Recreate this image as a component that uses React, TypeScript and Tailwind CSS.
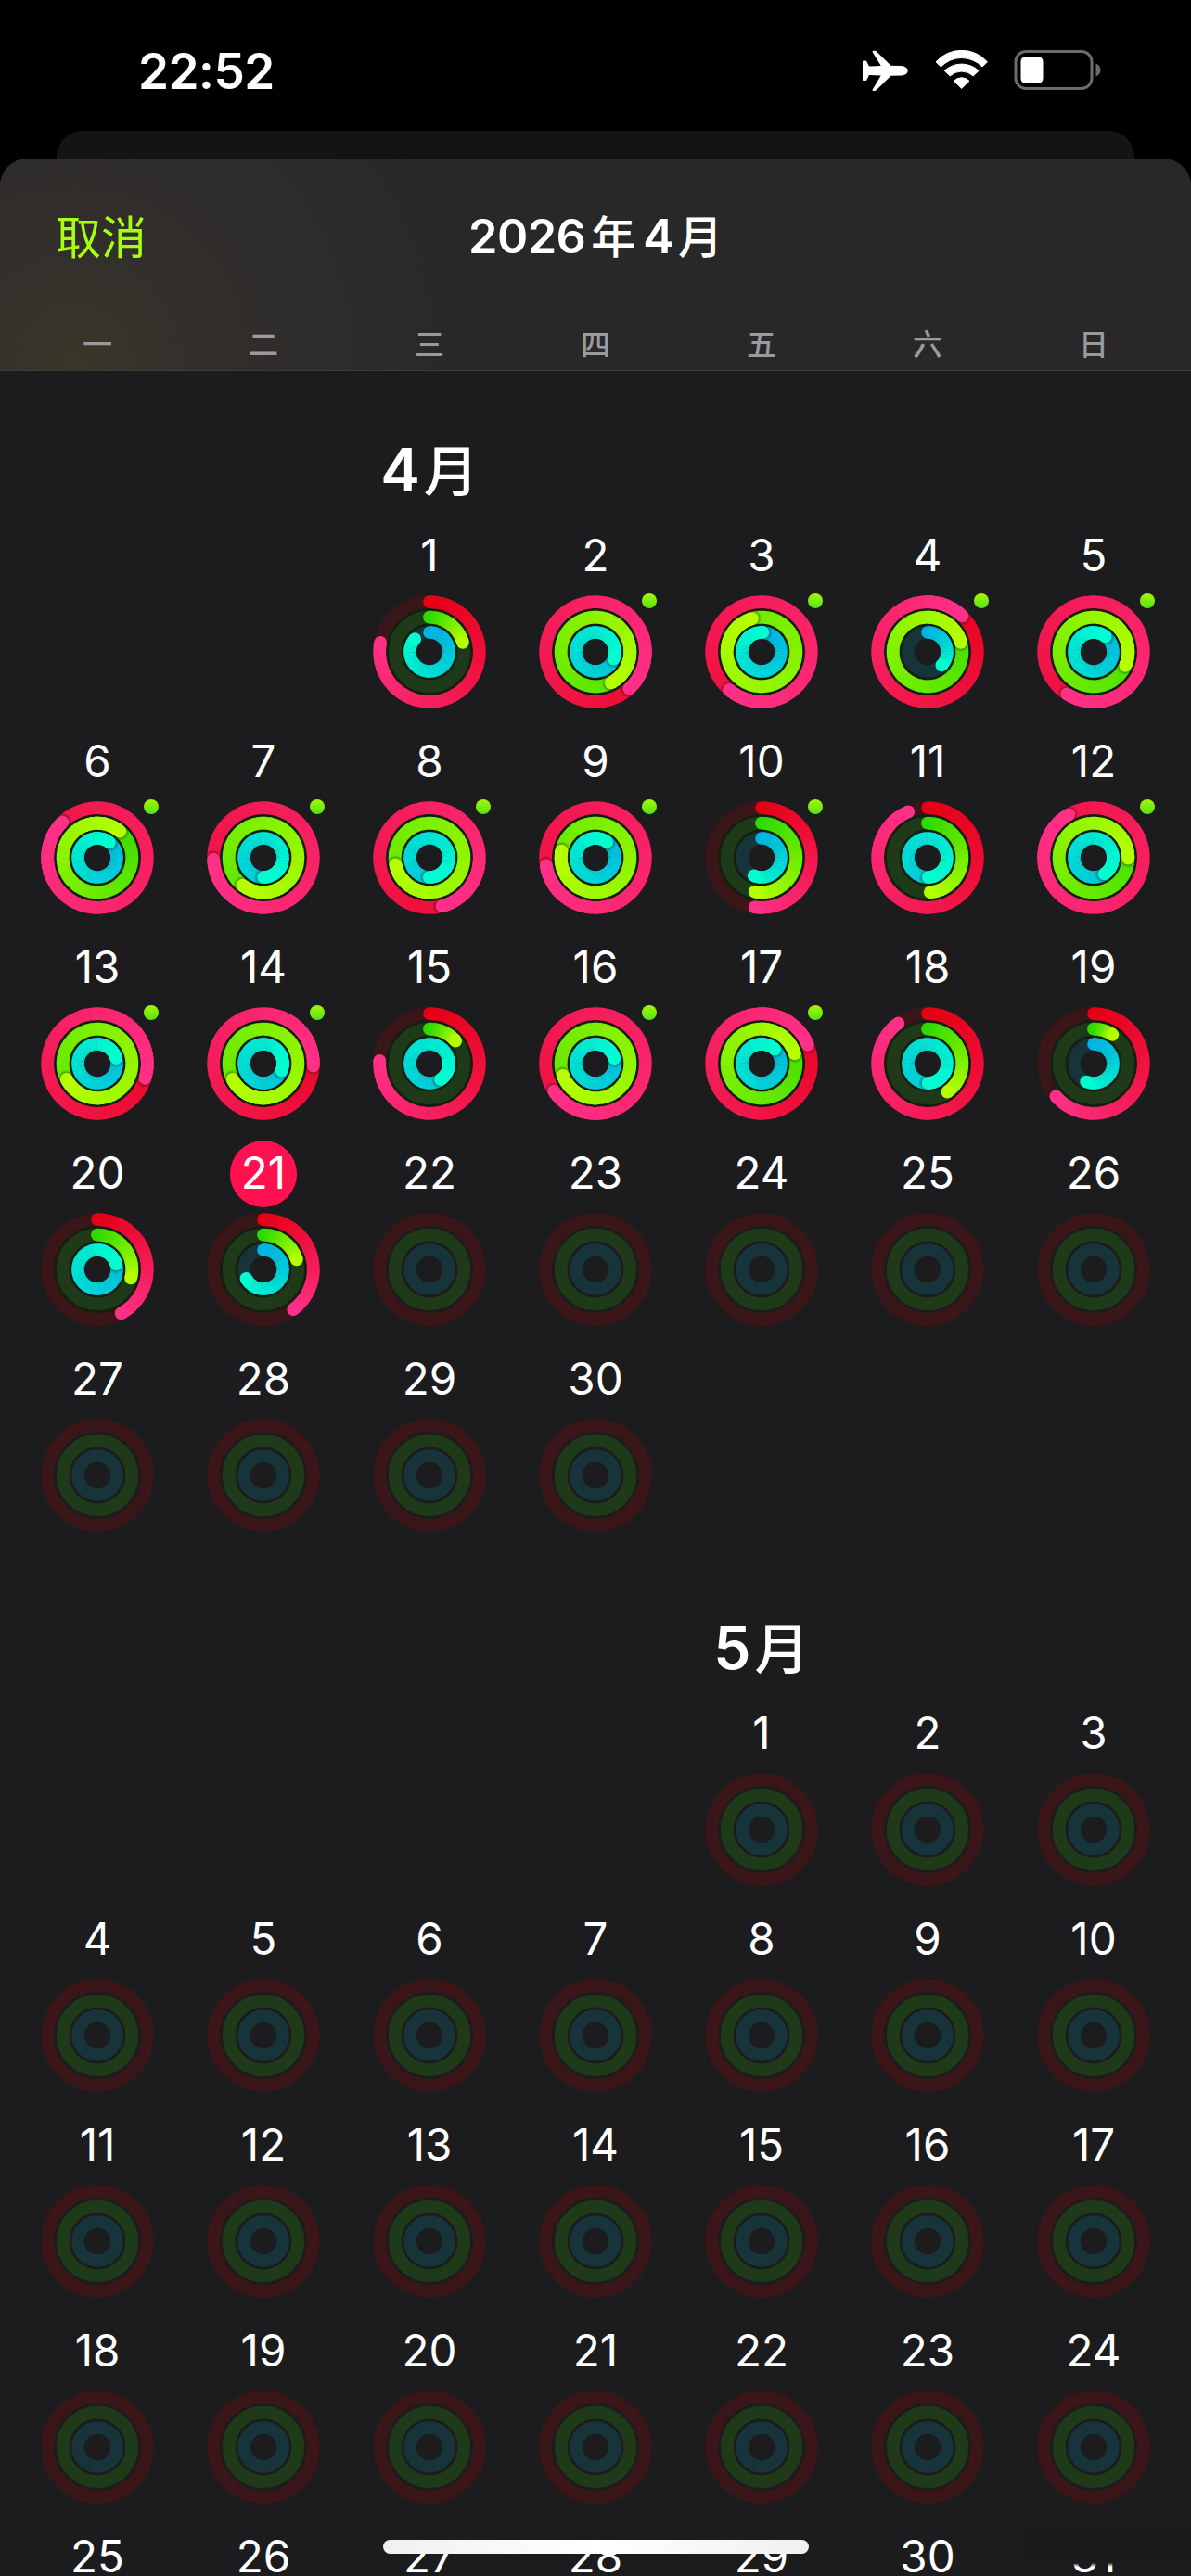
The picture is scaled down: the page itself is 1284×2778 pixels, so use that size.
import React from 'react';

type RGB = [number, number, number];

interface RingStyle {
  radius: number;
  width: number;
  track: string;
  from: RGB;
  to: RGB;
}

interface MonthData {
  name: string;
  offset: number;
  days: number;
  today?: number;
  titleClass: string;
}

const WEEKDAYS = ['一', '二', '三', '四', '五', '六', '日'];

// Move, exercise, stand
const RINGS: RingStyle[] = [
  { radius: 53.8, width: 13.7, track: '#3a1619', from: [229, 0, 20], to: [255, 48, 136] },
  { radius: 37.3, width: 13.8, track: '#1f3a18', from: [48, 218, 0], to: [182, 255, 0] },
  { radius: 21, width: 13.5, track: '#17343b', from: [0, 180, 226], to: [0, 255, 208] },
];

const MONTHS: MonthData[] = [
  { name: '4月', offset: 2, days: 30, today: 21, titleClass: 'col-start-3 h-[164px] pt-[67px]' },
  { name: '5月', offset: 4, days: 31, titleClass: 'col-start-5 h-[160px] pt-[63px]' },
];

// Progress per day of April, 1 is a closed ring
const ACTIVITY: Record<number, [number, number, number]> = {
  1: [0.78, 0.206, 0.866],
  2: [1.382, 1.426, 1.31],
  3: [1.613, 1.957, 1.012],
  4: [1.123, 1.206, 0.37],
  5: [1.59, 1.315, 1.105],
  6: [1.877, 1.113, 1.106],
  7: [1.745, 1.603, 1.5],
  8: [1.46, 1.718, 1.503],
  9: [1.726, 1.782, 1.1],
  10: [0.522, 0.531, 0.565],
  11: [0.937, 0.488, 1.495],
  12: [1.917, 1.253, 1.407],
  13: [1.298, 1.675, 1.206],
  14: [1.258, 1.675, 1.31],
  15: [0.759, 0.136, 1.404],
  16: [1.657, 1.695, 1.208],
  17: [1.189, 1.204, 1.12],
  18: [0.9, 0.403, 1.497],
  19: [0.636, 0.092, 0.562],
  20: [0.421, 0.29, 1.208],
  21: [0.398, 0.204, 0.674],
};

const WORKOUT_DAYS = [2, 3, 4, 5, 6, 7, 8, 9, 10, 12, 13, 14, 16, 17];

const pointAt = (turn: number, radius: number) => {
  const angle = turn * Math.PI * 2;
  return { x: Math.sin(angle) * radius, y: -Math.cos(angle) * radius };
};

const mix = (from: RGB, to: RGB, t: number) =>
  `rgb(${from.map((c, i) => Math.round(c + (to[i] - c) * t)).join(',')})`;

const STEP = 1 / 90;

const ProgressArc: React.FC<{ ring: RingStyle; value: number; id: string }> = ({ ring, value, id }) => {
  const { radius, width, from, to } = ring;
  const start = Math.max(0, value - 1);
  const count = Math.ceil((value - start) / STEP);
  const segments = Array.from({ length: count }, (_, i) => {
    const a = start + i * STEP;
    const b = Math.min(a + STEP, value);
    const p = pointAt(a, radius);
    const q = pointAt(Math.min(b + 0.003, value), radius);
    return (
      <path
        key={i}
        d={`M${p.x} ${p.y}A${radius} ${radius} 0 0 1 ${q.x} ${q.y}`}
        stroke={mix(from, to, (a + b) / 2 / value)}
        strokeWidth={width}
        fill="none"
      />
    );
  });
  const first = pointAt(0, radius);
  const last = pointAt(value, radius);
  const shadow = pointAt(value + 0.9 / (radius * Math.PI * 2), radius);

  return (
    <g>
      {value <= 1 && <circle cx={first.x} cy={first.y} r={width / 2} fill={mix(from, to, 0)} />}
      {segments}
      {value > 1 && (
        <>
          <radialGradient id={id} gradientUnits="userSpaceOnUse" cx={shadow.x} cy={shadow.y} r={9.5}>
            <stop offset="0.6" stopColor="#000" stopOpacity="0.35" />
            <stop offset="1" stopColor="#000" stopOpacity="0" />
          </radialGradient>
          <circle r={radius} fill="none" stroke={`url(#${id})`} strokeWidth={width} />
          {segments.slice(-18)}
        </>
      )}
      <circle cx={last.x} cy={last.y} r={width / 2} fill={mix(from, to, 1)} />
    </g>
  );
};

const ActivityRings: React.FC<{ values?: [number, number, number]; id: string }> = ({ values, id }) => (
  <svg className="w-[122px] h-[122px]" viewBox="-61 -61 122 122">
    {values && <circle r="52" fill="#14200f" />}
    {values && <circle r="14.5" fill="#1c1c1e" />}
    {RINGS.map((ring, i) => (
      <g key={i}>
        <circle r={ring.radius} fill="none" stroke={ring.track} strokeWidth={ring.width} />
        {values && <ProgressArc ring={ring} value={values[i]} id={`${id}-${i}`} />}
      </g>
    ))}
  </svg>
);

const DayCell: React.FC<{ day: number; month: MonthData }> = ({ day, month }) => {
  const isCurrent = month.today !== undefined;
  const values = isCurrent ? ACTIVITY[day] : undefined;

  return (
    <div className="h-[222px] flex flex-col items-center gap-1.5">
      <div
        className={`w-[72px] h-[72px] shrink-0 rounded-full flex items-center justify-center ${
          month.today === day ? 'bg-[#ff1150]' : ''
        }`}
      >
        <span className="text-[47.5px] leading-[68px] pb-0.5 text-white">{day}</span>
      </div>
      <div className="relative">
        <ActivityRings values={values} id={`${month.name}-${day}`} />
        {isCurrent && WORKOUT_DAYS.includes(day) && (
          <span className="absolute -top-0.5 left-[110.5px] w-4 h-4 rounded-full bg-linear-to-b from-[#a2f800] to-[#4fe314]" />
        )}
      </div>
    </div>
  );
};

const Month: React.FC<{ month: MonthData }> = ({ month }) => (
  <section className="grid grid-cols-7 px-[15.5px]">
    <h2 className={`${month.titleClass} flex items-baseline justify-center text-[64px] leading-[80px] font-semibold text-white whitespace-nowrap`}>
      {month.name.charAt(0)}
      <span className="ml-1 text-[59px] font-medium">月</span>
    </h2>
    <div className="col-span-7 grid grid-cols-7">
      {Array.from({ length: month.offset }, (_, i) => (
        <div key={`empty-${i}`} />
      ))}
      {Array.from({ length: month.days }, (_, i) => (
        <DayCell key={i} day={i + 1} month={month} />
      ))}
    </div>
  </section>
);

const StatusBar: React.FC = () => (
  <div className="h-[141px] shrink-0 flex items-start justify-between pl-[149px] pr-[96px]">
    <span className="mt-[44px] text-[53px] leading-[66px] tracking-[-0.5px] font-semibold text-white">22:52</span>
    <div className="mt-[54px] flex items-start">
      <svg className="w-[49px] h-[46px]" viewBox="0 0 49 46" fill="#fff">
        <path d="M0 12.4Q0 11.5 1 11.5H3Q4 11.5 4.4 12.4L7 17.6L19.7 17L10.7 2.2Q10.2 .7 11.5 .7H13Q14.4 .7 15.2 1.8L30.5 16.8L42 17Q48.8 18.2 48.8 22.3Q48.8 26.4 42 27.6L30.5 27.8L15.2 42.8Q14.4 43.9 13 43.9H11.5Q10.2 43.9 10.7 42.4L19.7 27.6L7 27L4.4 32.2Q4 33.1 3 33.1H1Q0 33.1 0 32.2Z" />
      </svg>
      <svg className="ml-[29px] w-[58px] h-[43px]" viewBox="0 0 58 43" fill="#fff" stroke="#fff" strokeWidth="1" strokeLinejoin="round">
        <path d="M1 12.8A37 37 0 0 1 56.4 12.8L51 18A31 31 0 0 0 6.4 18Z" />
        <path d="M10.2 22.3A27.3 27.3 0 0 1 47.2 22.3L41.2 27.9A18.6 18.6 0 0 0 16.2 27.9Z" />
        <path d="M20.4 33.3A11.6 11.6 0 0 1 37 33.3L28.7 41.4Z" />
      </svg>
      <svg className="ml-[27px] w-[95px] h-[43px]" viewBox="0 0 95 43">
        <rect x="2" y="1.5" width="82" height="40" rx="11" fill="none" stroke="#6c6c6c" strokeWidth="3" />
        <rect x="7.5" y="7" width="24" height="29" rx="5.5" fill="#fff" />
        <path d="M88.5 14.5Q93.5 16.5 93.5 21.5Q93.5 26.5 88.5 28.5Z" fill="#6c6c6c" />
      </svg>
    </div>
  </div>
);

const App: React.FC = () => {
  return (
    <div className="relative w-[1284px] h-[2778px] overflow-hidden bg-black flex flex-col font-['Inter','Noto_Sans_CJK_SC',sans-serif]">
      <StatusBar />
      <div className="mx-[61px] h-[30px] shrink-0 rounded-t-[28px] bg-[#141414]" />
      <main className="grow min-h-0 overflow-hidden rounded-t-[30px] bg-[#1c1c1e]">
        <header className="h-[229px] flex flex-col bg-[#282828] border-b border-[#3c3c3e] bg-[radial-gradient(circle_at_80px_220px,#3a3629_0px,#332f2b_120px,#2d2c2c_270px,transparent_440px)]">
          <div className="h-[171px] shrink-0 grid grid-cols-3 items-center px-[60px]">
            <button className="text-left text-[49px] leading-[60px] text-[#a6ff0f]">取消</button>
            <h1 className="pb-[3px] flex items-baseline justify-center text-[50.5px] leading-[60px] font-semibold text-white whitespace-nowrap">
              <span className="tracking-[-0.6px]">2026</span>
              <span className="ml-1.5 mr-2 text-[48px] font-medium">年</span>4
              <span className="ml-1 text-[48px] font-medium">月</span>
            </h1>
          </div>
          <div className="grid grid-cols-7 px-[15.5px]">
            {WEEKDAYS.map((name) => (
              <span key={name} className="text-center text-[32px] leading-[60px] font-medium text-[#9b9a9f]">
                {name}
              </span>
            ))}
          </div>
        </header>
        {MONTHS.map((month) => (
          <Month key={month.name} month={month} />
        ))}
      </main>

      {/* Bottom edge: fade over the last date and the home indicator */}
      <div className="absolute left-[1100px] top-[2725px] w-[184px] h-[43px] bg-linear-to-b from-[#1b1b1d] from-90% to-transparent" />
      <div className="absolute left-[413px] top-[2739px] w-[459px] h-[15px] rounded-full bg-linear-to-r from-[#f0f0f0] via-white to-[#f0f0f0]" />
    </div>
  );
};

export default App;
